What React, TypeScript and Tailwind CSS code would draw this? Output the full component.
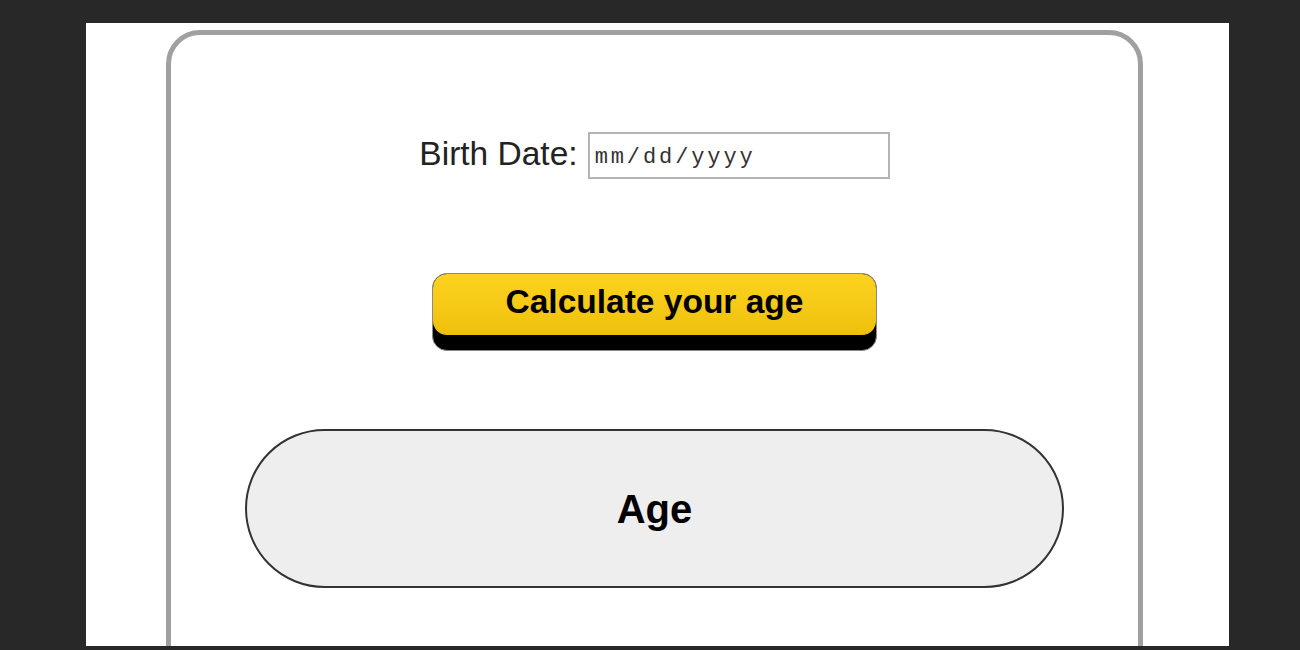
export default function App() {
  return (
    <div className="h-[650px] w-[1300px] overflow-hidden bg-[#282828] pt-[23px] font-['Liberation_Sans',Arial,sans-serif]">
      <div className="ml-[86px] h-[623px] w-[1143px] overflow-hidden bg-white pt-[7px]">
        {/* Card */}
        <div className="ml-[80px] h-[700px] w-[977px] rounded-[34px] border-[5px] border-[#a0a0a0] pt-[97px]">
          {/* Birth date row */}
          <div className="flex items-center justify-center gap-[10px]">
            <label className="-mt-[3px] text-[33.5px] leading-none text-[#222]">Birth Date:</label>
            <div className="flex h-[47px] w-[302px] items-center border-2 border-[#b4b4b4] pl-[5px] pt-[4px]">
              <span className="font-['Liberation_Mono','Courier_New',monospace] text-[22px] tracking-[2.9px] text-[#333]">
                mm/dd/yyyy
              </span>
            </div>
          </div>

          {/* Button */}
          <div className="mt-[94px] flex justify-center">
            <div className="flex h-[78px] w-[445px] cursor-pointer flex-col overflow-hidden rounded-[15px] border border-[#8a8a8a] bg-black">
              <div className="flex h-[61px] items-center justify-center rounded-[14px] bg-gradient-to-b from-[#fdd31f] to-[#eec00a] pb-[4px] text-[33.5px] font-bold text-black">
                Calculate your age
              </div>
            </div>
          </div>

          {/* Result */}
          <div className="mt-[78px] flex justify-center">
            <div className="flex h-[159px] w-[819px] items-center justify-center rounded-full border-2 border-[#333] bg-[#eeeeee]">
              <span className="text-[40px] font-bold text-black">Age</span>
            </div>
          </div>
        </div>
      </div>
    </div>
  )
}
